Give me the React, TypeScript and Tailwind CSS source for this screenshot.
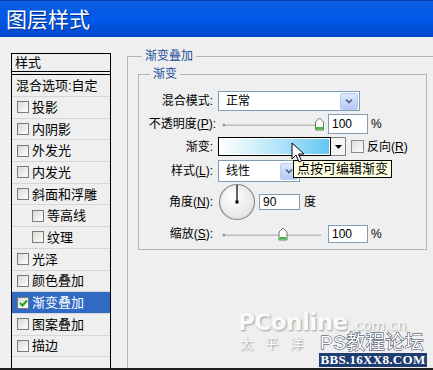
import React from "react";

const items = [
  { label: "投影" },
  { label: "内阴影" },
  { label: "外发光" },
  { label: "内发光" },
  { label: "斜面和浮雕" },
  { label: "等高线", indent: true },
  { label: "纹理", indent: true },
  { label: "光泽" },
  { label: "颜色叠加" },
  { label: "渐变叠加", active: true },
  { label: "图案叠加" },
  { label: "描边" },
];

const Check = ({ on }: { on?: boolean }) => (
  <div className="w-[12px] h-[12px] shrink-0 border border-[#7b7b7b] bg-gradient-to-br from-[#d8d8d4] to-white flex items-center justify-center">
    {on && (
      <svg width="9" height="8" viewBox="0 0 9 8">
        <path d="M1 4 L3.5 6.5 L8 1.5" stroke="#21a121" strokeWidth="2" fill="none" />
      </svg>
    )}
  </div>
);

const DropBtn = () => (
  <div className="w-[18px] h-[17px] rounded-[2px] border border-[#b9c9ef] bg-gradient-to-b from-[#dfe8fd] to-[#b4c9f6] flex items-center justify-center">
    <svg width="8" height="6" viewBox="0 0 8 6">
      <path d="M1 1.5 L4 4.5 L7 1.5" stroke="#4d6185" strokeWidth="1.7" fill="none" />
    </svg>
  </div>
);

const Slider = ({ pos }: { pos: number }) => (
  <svg width="106" height="20" viewBox="0 0 106 20" className="shrink-0">
    <line x1="6" y1="11" x2="102" y2="11" stroke="#bdbdbd" strokeWidth="2" strokeLinecap="round" />
    <line x1="6" y1="10.5" x2="102" y2="10.5" stroke="#e8e8e8" strokeWidth="0.6" />
    <circle cx="6" cy="11" r="1.5" fill="#9a9a9a" />
    <path
      d={`M${pos - 4} 16 L${pos - 4} 8 L${pos} 4 L${pos + 4} 8 L${pos + 4} 16 Z`}
      fill="#fbfbfb"
      stroke="#6f7b6f"
      strokeWidth="1"
    />
    <rect x={pos - 3.5} y="13" width="7" height="2.5" fill="#3fbf3f" />
  </svg>
);

const Row = ({ label, h, mt, children }: { label: React.ReactNode; h: string; mt: string; children: React.ReactNode }) => (
  <div className={`flex items-center ${h} ${mt}`}>
    <div className="w-[74px] text-right shrink-0">{label}</div>
    <div className="ml-[5px] flex items-center">{children}</div>
  </div>
);

export default function App() {
  return (
    <div className="relative w-[433px] h-[370px] overflow-hidden bg-[#efefef] flex flex-col font-['Liberation_Sans','Noto_Sans_CJK_SC',sans-serif] text-[12px] text-black leading-none">
      {/* title bar */}
      <div className="h-[37px] shrink-0 border-t border-[#0a3fa8] bg-gradient-to-b from-[#0b5ee0] via-[#0058e8] to-[#0048cc] flex items-center pl-[6px]">
        <span className="text-[21px] text-white [text-shadow:1px_1px_0_#0a2f8a]">图层样式</span>
      </div>

      {/* body */}
      <div className="flex-1 flex pl-[11px]">
        {/* styles list */}
        <div className="mt-[16px] w-[100px] shrink-0 border border-b-0 border-black flex flex-col text-[13px]">
          <div className="h-[21px] pl-[3px] flex items-center border-b-[4px] border-double border-black">样式</div>
          <div className="h-[22px] pl-[4px] flex items-center border-b border-[#d6d6d6]">混合选项:自定</div>
          {items.map((it) => (
            <div
              key={it.label}
              className={`h-[21.7px] flex items-center gap-[3px] border-b border-[#d6d6d6] ${it.indent ? "pl-[20px]" : "pl-[5px]"} ${it.active ? "bg-[#316ac5] text-white" : ""}`}
            >
              <Check on={it.active} />
              <span>{it.label}</span>
            </div>
          ))}
        </div>

        {/* gradient overlay settings */}
        <fieldset className="ml-[16px] mt-[11px] w-[330px] shrink-0 border border-b-0 border-[#b4b4b4]">
          <legend className="ml-[14px] px-[3px] leading-[16px] text-[#1c4f9c]">渐变叠加</legend>
          <fieldset className="ml-[10px] mt-[2px] w-[289px] border border-[#b4b4b4] pt-[9px] pb-[6px]">
            <legend className="ml-[11px] px-[3px] leading-[16px] text-[#1c4f9c]">渐变</legend>

            <Row label="混合模式:" h="h-[20px]" mt="">
              <div className="w-[142px] h-[20px] border border-[#7f9db9] bg-white flex items-center justify-between pl-[7px] pr-px">
                <span>正常</span>
                <DropBtn />
              </div>
            </Row>

            <Row
              label={
                <span className="-mr-[3px]">
                  不透明度(<span className="underline">P</span>):
                </span>
              }
              h="h-[20px]"
              mt="mt-[3px]"
            >
              <Slider pos={101.5} />
              <div className="ml-[4px] w-[40px] h-[20px] border border-[#7f9db9] bg-white flex items-center pl-[3px]">100</div>
              <span className="ml-[3px]">%</span>
            </Row>

            <Row label="渐变:" h="h-[19px]" mt="mt-[3px]">
              <div className="w-[113px] h-[19px] border border-black p-px bg-white">
                <div className="w-full h-full bg-gradient-to-r from-white via-[#b8e6fa] to-[#62c8f2]" />
              </div>
              <div className="w-[15px] h-[19px] border border-l-0 border-[#808080] bg-[#f4f4f4] flex items-center justify-center">
                <svg width="7" height="4" viewBox="0 0 7 4">
                  <path d="M0 0 L7 0 L3.5 4 Z" fill="#000" />
                </svg>
              </div>
              <div className="ml-[5px] w-[13px] h-[13px] border border-[#8a8a8a] bg-gradient-to-br from-[#dcdcd8] to-white" />
              <span className="ml-[3px]">
                反向(<span className="underline">R</span>)
              </span>
            </Row>

            <Row
              label={
                <span>
                  样式(<span className="underline">L</span>):
                </span>
              }
              h="h-[22px]"
              mt="mt-[4px]"
            >
              <div className="w-[82px] h-[22px] border border-[#7f9db9] bg-white flex items-center justify-between pl-[7px] pr-px">
                <span>线性</span>
                <DropBtn />
              </div>
            </Row>

            <Row
              label={
                <span>
                  角度(<span className="underline">N</span>):
                </span>
              }
              h="h-[38px]"
              mt="mt-[1px]"
            >
              <svg width="38" height="38" viewBox="0 0 38 38" className="shrink-0">
                <defs>
                  <radialGradient id="dial" cx="40%" cy="35%" r="70%">
                    <stop offset="0%" stopColor="#ffffff" />
                    <stop offset="100%" stopColor="#e2e2e2" />
                  </radialGradient>
                </defs>
                <circle cx="19" cy="19" r="17.5" fill="url(#dial)" stroke="#8a8a8a" strokeWidth="1.2" />
                <circle cx="19" cy="19" r="16.5" fill="none" stroke="#d8d8d8" strokeWidth="0.8" />
                <line x1="19" y1="19" x2="19" y2="2" stroke="#000" strokeWidth="1.2" />
                <rect x="17.5" y="17.5" width="3" height="3" fill="#000" />
              </svg>
              <div className="ml-[3px] w-[41px] h-[16px] border border-[#7f9db9] bg-white flex items-center pl-[3px]">90</div>
              <span className="ml-[4px]">度</span>
            </Row>

            <Row
              label={
                <span>
                  缩放(<span className="underline">S</span>):
                </span>
              }
              h="h-[18px]"
              mt="mt-[4px]"
            >
              <Slider pos={65} />
              <div className="ml-[4px] w-[40px] h-[18px] border border-[#7f9db9] bg-white flex items-center pl-[3px]">100</div>
              <span className="ml-[3px]">%</span>
            </Row>
          </fieldset>
        </fieldset>
      </div>

      {/* window bottom edge */}
      <div className="h-[2px] shrink-0 bg-[#1e1e1e]" />

      {/* tooltip */}
      <div className="absolute left-[293px] top-[160px] h-[18px] px-[3px] border border-black bg-[#ffffe1] text-[13px] leading-[16px]">点按可编辑渐变</div>

      {/* mouse cursor */}
      <svg className="absolute left-[291px] top-[142px]" width="14" height="22" viewBox="0 0 14 22">
        <path d="M1 1 L1 17 L5 13 L8 20 L10.5 19 L7.5 12 L13 12 Z" fill="#fff" stroke="#000" strokeWidth="1" strokeLinejoin="round" />
      </svg>

      {/* watermark */}
      <div className="absolute left-[238px] top-[311px] flex items-baseline leading-[22px] text-[#fafafa] [text-shadow:1px_1px_2px_rgba(0,0,0,0.35)]">
        <span className="text-[23px] font-bold tracking-[-0.5px] font-['DejaVu_Sans',sans-serif]">PConline</span>
        <span className="ml-[3px] text-[14px] font-['DejaVu_Sans',sans-serif]">.com.cn</span>
      </div>
      <div className="absolute left-[240px] top-[337px] text-[13px] leading-[14px] tracking-[12px] text-[#fafafa] [text-shadow:1px_1px_2px_rgba(0,0,0,0.4)]">太平洋</div>
      <div className="absolute left-[320px] top-[334px] text-[19px] leading-[18px] tracking-[0.5px] text-white [-webkit-text-stroke:1px_#24324f] [paint-order:stroke_fill]">PS教程论坛</div>
      <div className="absolute left-[319px] top-[353px] w-[108px] h-[14px] bg-[#203d72] text-white text-[13px] leading-[14px] font-bold text-center font-['Liberation_Serif',serif] tracking-[0.3px]">BBS.16XX8.COM</div>
    </div>
  );
}
